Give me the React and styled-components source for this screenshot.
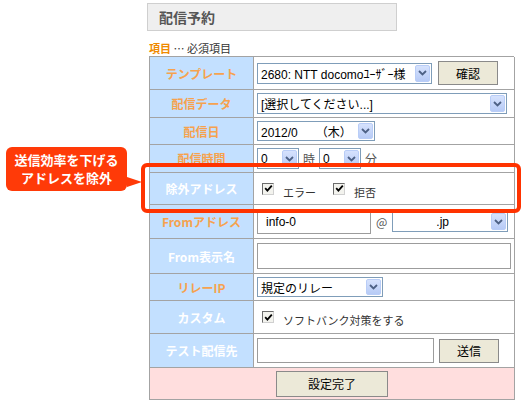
import React from 'react';
import styled, { createGlobalStyle } from 'styled-components';

const GlobalStyle = createGlobalStyle`
  html, body {
    margin: 0;
    padding: 0;
    background: #fff;
  }
  body {
    font-family: "Liberation Sans", "Noto Sans CJK JP", sans-serif;
    font-size: 12px;
    color: #000;
  }
`;

const Page = styled.div`
  position: relative;
  width: 525px;
  height: 404px;
  overflow: hidden;
  padding: 3px 0 0 147px;
  box-sizing: border-box;
`;

const Title = styled.div`
  width: 250px;
  height: 28px;
  box-sizing: border-box;
  border: 1px solid #cfcfcf;
  background: #efefef;
  padding-left: 11px;
  display: flex;
  align-items: center;
  font-family: "Noto Sans CJK JP", sans-serif;
  font-size: 14px;
  font-weight: bold;
  color: #555;
`;

const Note = styled.div`
  margin: 9px 0 0 2px;
  height: 16px;
  line-height: 16px;
  font-family: "Noto Sans CJK JP", sans-serif;
  font-size: 11px;
  color: #333;
  strong {
    color: #ef8a00;
  }
`;

const Table = styled.div`
  margin-left: 2px;
  width: 365px;
  display: grid;
  grid-template-columns: 104px 261px;
  border-top: 1px solid #a3a3a3;
  border-left: 1px solid #a3a3a3;
  box-sizing: border-box;
`;

const Label = styled.div`
  height: ${(p) => p.h}px;
  box-sizing: border-box;
  border-right: 1px solid #a3a3a3;
  border-bottom: 1px solid #a3a3a3;
  background: #c3e0ff;
  display: flex;
  align-items: center;
  justify-content: center;
  font-family: "Noto Sans CJK JP", sans-serif;
  font-size: 12px;
  font-weight: bold;
  color: ${(p) => (p.required ? '#f6a24e' : '#fff')};
`;

const Value = styled.div`
  height: ${(p) => p.h}px;
  box-sizing: border-box;
  border-right: 1px solid #a3a3a3;
  border-bottom: 1px solid #a3a3a3;
  background: #fff;
  display: flex;
  align-items: center;
  padding-left: ${(p) => p.pl || 3}px;
  gap: ${(p) => p.gap || 4}px;
`;

const Footer = styled.div`
  grid-column: 1 / 3;
  height: 32px;
  box-sizing: border-box;
  border-right: 1px solid #a3a3a3;
  border-bottom: 1px solid #a3a3a3;
  background: #ffdede;
  display: flex;
  align-items: center;
  justify-content: center;
`;

const SelectBox = styled.div`
  width: ${(p) => p.w}px;
  height: ${(p) => p.h || 20}px;
  box-sizing: border-box;
  border: 1px solid #7f9db9;
  background: #fff;
  display: flex;
  align-items: center;
  padding: 1px;
  font-size: 12px;
  white-space: nowrap;
  overflow: hidden;
`;

const SelectText = styled.span`
  flex: 1;
  overflow: hidden;
  padding-left: ${(p) => p.pl || 2}px;
  font-family: "Liberation Sans", "Noto Sans CJK JP", sans-serif;
`;

const ArrowBtn = styled.span`
  width: 15px;
  height: 100%;
  flex: none;
  box-sizing: border-box;
  border: 1px solid #b9cdf7;
  border-radius: 2px;
  background: linear-gradient(#d6e2fd, #b7cbf6);
  display: flex;
  align-items: center;
  justify-content: center;
`;

const TextInput = styled.div`
  width: ${(p) => p.w}px;
  height: ${(p) => p.h || 23}px;
  box-sizing: border-box;
  border: 1px solid #9c9c9c;
  background: #fff;
  display: flex;
  align-items: center;
  padding-left: 8px;
  font-size: 12px;
`;

const Button = styled.div`
  width: ${(p) => p.w}px;
  height: ${(p) => p.h || 23}px;
  box-sizing: border-box;
  border: 1px solid #8a8a8a;
  background: #ece9d8;
  display: flex;
  align-items: center;
  justify-content: center;
  font-family: "Noto Sans CJK JP", sans-serif;
  font-size: 12px;
  color: #000;
`;

const Unit = styled.span`
  font-family: "Noto Sans CJK JP", sans-serif;
  font-size: 12px;
  color: ${(p) => p.color || '#000'};
`;

const Check = styled.label`
  display: flex;
  align-items: flex-end;
  gap: 9px;
  font-family: "Noto Sans CJK JP", sans-serif;
  font-size: 11px;
  line-height: 14px;
  color: #333;
  margin-top: 4px;
`;

const Box = styled.span`
  width: 12px;
  height: 12px;
  margin-bottom: 4px;
  box-sizing: border-box;
  border: 1px solid #6c6c6c;
  border-right-color: #d0d0d0;
  border-bottom-color: #d0d0d0;
  background: #f3f3ee;
  display: flex;
  align-items: center;
  justify-content: center;
`;

const Highlight = styled.div`
  position: absolute;
  left: 141px;
  top: 163px;
  width: 380px;
  height: 50px;
  box-sizing: border-box;
  border: 4px solid #ff3300;
  border-radius: 6px;
  pointer-events: none;
`;

const Callout = styled.div`
  position: absolute;
  left: 6px;
  top: 147px;
  width: 121px;
  height: 44px;
  box-sizing: border-box;
  background: #ff3a08;
  border-radius: 6px;
  display: flex;
  flex-direction: column;
  align-items: center;
  justify-content: center;
  font-family: "Noto Sans CJK JP", sans-serif;
  font-size: 13px;
  font-weight: bold;
  color: #fff;
  &::after {
    content: '';
    position: absolute;
    right: -15px;
    top: 30px;
    border-left: 15px solid #ff3a08;
    border-top: 5px solid transparent;
    border-bottom: 5px solid transparent;
  }
`;

const CalloutLine = styled.div`
  height: 18px;
  line-height: 18px;
  overflow: visible;
  white-space: nowrap;
`;

const Chevron = () => (
  <svg width="9" height="6" viewBox="0 0 9 6">
    <path d="M1 1 L4.5 4.5 L8 1" fill="none" stroke="#4d6185" strokeWidth="1.8" />
  </svg>
);

const Tick = () => (
  <svg width="9" height="9" viewBox="0 0 9 9">
    <path d="M1.2 4.2 L3.4 6.6 L7.8 1.6" fill="none" stroke="#000" strokeWidth="1.8" />
  </svg>
);

const Select = ({ w, h, children, pl }) => (
  <SelectBox w={w} h={h}>
    <SelectText pl={pl}>{children}</SelectText>
    <ArrowBtn>
      <Chevron />
    </ArrowBtn>
  </SelectBox>
);

const CheckItem = ({ children }) => (
  <Check>
    <Box>
      <Tick />
    </Box>
    <span>{children}</span>
  </Check>
);

const App = () => (
  <>
    <GlobalStyle />
    <Page>
      <Title>配信予約</Title>
      <Note>
        <strong>項目</strong> … 必須項目
      </Note>
      <Table>
        <Label h={33} required>テンプレート</Label>
        <Value h={33} gap={6}>
          <Select w={175} h={21}>2680: NTT docomoﾕｰｻﾞｰ様</Select>
          <Button w={60} h={24}>確認</Button>
        </Value>

        <Label h={28} required>配信データ</Label>
        <Value h={28}>
          <Select w={250} h={21}>[選択してください...]</Select>
        </Value>

        <Label h={27} required>配信日</Label>
        <Value h={27}>
          <Select w={118} h={20}>2012/0　　（木）</Select>
        </Value>

        <Label h={28} required>配信時間</Label>
        <Value h={28} gap={4}>
          <Select w={42} h={21}>0</Select>
          <Unit color="#555">時</Unit>
          <Select w={42} h={21}>0</Select>
          <Unit color="#555">分</Unit>
        </Value>

        <Label h={32}>除外アドレス</Label>
        <Value h={32} pl={8} gap={17}>
          <CheckItem>エラー</CheckItem>
          <CheckItem>拒否</CheckItem>
        </Value>

        <Label h={34} required>Fromアドレス</Label>
        <Value h={34} gap={5}>
          <TextInput w={114} h={24}>info-0</TextInput>
          <Unit color="#555">@</Unit>
          <Select w={116} h={21} pl={42}>.jp</Select>
        </Value>

        <Label h={35}>From表示名</Label>
        <Value h={35}>
          <TextInput w={254} h={26} />
        </Value>

        <Label h={27} required>リレーIP</Label>
        <Value h={27}>
          <Select w={126} h={20}>規定のリレー</Select>
        </Value>

        <Label h={33}>カスタム</Label>
        <Value h={33} pl={8}>
          <CheckItem>ソフトバンク対策をする</CheckItem>
        </Value>

        <Label h={34}>テスト配信先</Label>
        <Value h={34} gap={5}>
          <TextInput w={177} h={25} />
          <Button w={60} h={24}>送信</Button>
        </Value>

        <Footer>
          <Button w={112} h={26}>設定完了</Button>
        </Footer>
      </Table>
      <Highlight />
      <Callout>
        <CalloutLine>送信効率を下げる</CalloutLine>
        <CalloutLine>アドレスを除外</CalloutLine>
      </Callout>
    </Page>
  </>
);

export default App;
